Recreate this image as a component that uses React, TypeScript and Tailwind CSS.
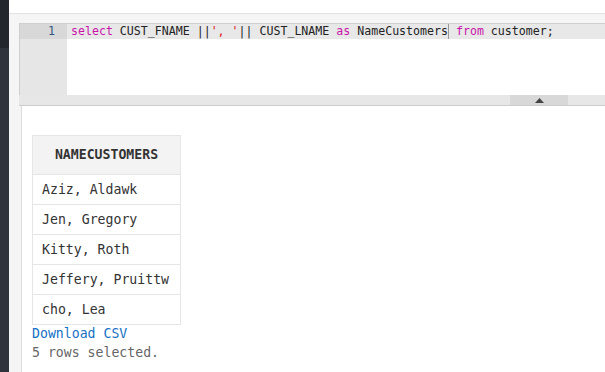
export default function App() {
  const mono = { fontFamily: '"DejaVu Sans Mono", monospace' };
  const rows = ["Aziz, Aldawk", "Jen, Gregory", "Kitty, Roth", "Jeffery, Pruittw", "cho, Lea"];
  return (
    <div className="flex w-[605px] h-[372px] overflow-hidden bg-[#f5f5f5]" style={mono}>
      <div className="flex flex-col w-[9px] shrink-0">
        <div className="h-[48px] bg-[#23272d]" />
        <div className="flex-1 bg-[#2f343c]" />
      </div>
      <div className="flex flex-col flex-1 min-w-0">
        <div className="h-[14px] bg-white border-b border-[#e2e2e2] shrink-0" />
        <div className="h-[9px] shrink-0" />
        <div className="ml-[10px] flex h-[72px] border-t border-l border-[#cfcfcf] bg-white shrink-0">
          <div className="w-[47px] bg-[#e6e6e6] shrink-0">
            <div className="h-[15px] bg-[#d8d8d8] text-right pr-[12px] text-[11.6px] leading-[15px] text-[#34557f]">1</div>
          </div>
          <div className="flex-1 min-w-0">
            <div className="h-[15px] bg-[#e8e8e8] pl-[4px] text-[11.6px] leading-[15px] text-[#222] whitespace-pre flex">
              <span className="text-[#c915a9]">select</span>
              <span> CUST_FNAME ||</span>
              <span className="text-[#e0161a]">', '</span>
              <span>|| CUST_LNAME </span>
              <span className="text-[#c915a9]">as</span>
              <span> NameCustomers</span>
              <span className="w-[1px] h-[15px] bg-[#999]" />
              <span> </span>
              <span className="text-[#c915a9]">from</span>
              <span> customer;</span>
            </div>
          </div>
        </div>
        <div className="ml-[10px] h-[11px] bg-[#e7e7e7] border-b border-[#cdcdcd] shrink-0 flex">
          <div className="w-[491px]" />
          <div className="w-[58px] bg-[#d8d8d8] flex items-center justify-center">
            <svg width="9" height="5" viewBox="0 0 9 5"><polygon points="0,5 4.5,0 9,5" fill="#444" /></svg>
          </div>
        </div>
        <div className="ml-[12px] flex-1 bg-white border-l border-[#dcdcdc] pl-[10px] pt-[29px]">
          <table className="border-collapse text-[13.2px] text-[#333]">
            <thead>
              <tr>
                <th className="h-[39px] w-[148px] border border-[#e6e6e6] bg-[#f3f3f3] font-bold text-center text-[#333]">NAMECUSTOMERS</th>
              </tr>
            </thead>
            <tbody>
              {rows.map((r) => (
                <tr key={r}>
                  <td className="h-[30px] border border-[#e6e6e6] pl-[9px] text-left whitespace-nowrap">{r}</td>
                </tr>
              ))}
            </tbody>
          </table>
          <div className="-mt-[1px] text-[13.2px] leading-[19px] text-[#1570c4]">Download CSV</div>
          <div className="text-[13.2px] leading-[19px] text-[#666]">5 rows selected.</div>
        </div>
      </div>
    </div>
  );
}
